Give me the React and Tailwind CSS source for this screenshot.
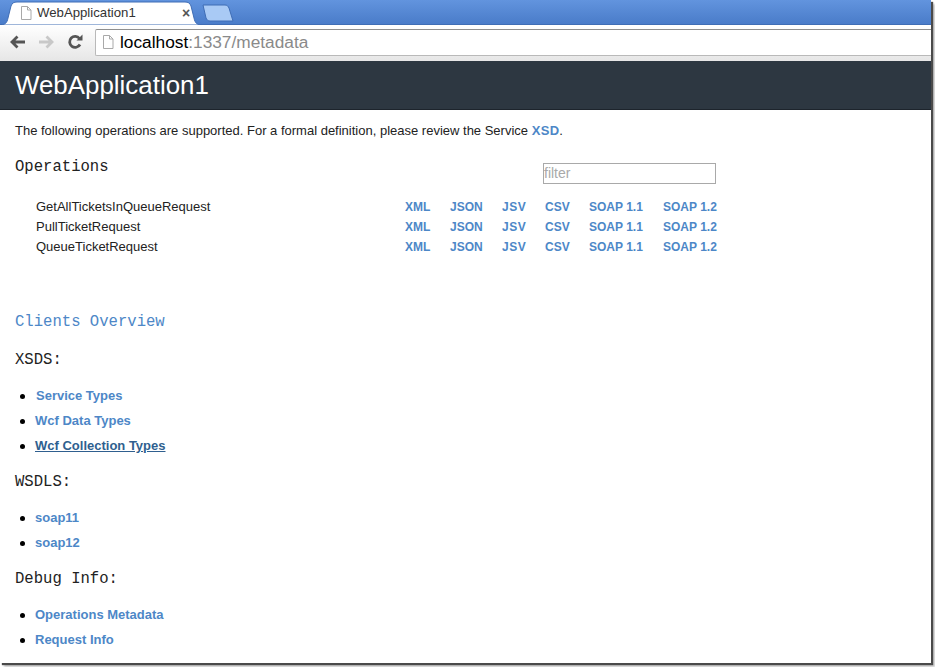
import React from 'react';

const formats = [
    { label: 'XML', className: 'w-[45px]' },
    { label: 'JSON', className: 'w-[52px]' },
    { label: 'JSV', className: 'w-[43px] tracking-[0.5px]' },
    { label: 'CSV', className: 'w-[44px]' },
    { label: 'SOAP 1.1', className: 'w-[74px]' },
    { label: 'SOAP 1.2', className: 'w-[56px] whitespace-nowrap' },
];

const operations = ['GetAllTicketsInQueueRequest', 'PullTicketRequest', 'QueueTicketRequest'];

function PageIcon({ className }) {
    return (
        <svg className={className} viewBox="0 0 14 16" fill="none">
            <path d="M2.500 1.500h6l3.500 3.500v9.500h-9.500z" fill="#fff" stroke="#a9a9a9" />
            <path d="M8.500 1.500v3.500h3.500" stroke="#a9a9a9" />
        </svg>
    );
}

function Heading({ children, className = '' }) {
    return <h2 className={`font-['Liberation_Mono',monospace] text-[15.600px] leading-[20px] text-[#222] ${className}`}>{children}</h2>;
}

function LinkList({ items, className = '' }) {
    return (
        <ul className={`flex flex-col gap-[7px] ${className}`}>
            {items.map((item) => (
                <li key={item.label} className="flex h-[18px] items-center">
                    <span className="ml-[5px] h-[5px] w-[5px] rounded-full bg-black"></span>
                    <a className={`text-[13px] font-bold leading-[18px] text-[#4d87c7] ${item.className || 'ml-[10px]'}`}>{item.label}</a>
                </li>
            ))}
        </ul>
    );
}

export default function App() {
    return (
        <div className="h-[667px] w-[935px] overflow-hidden bg-white font-['Liberation_Sans',sans-serif]">
            <div className="h-[663px] w-[931px] overflow-hidden bg-white shadow-[2px_2px_1px_#4a4a4a,4px_4px_2px_#c4c4c4]">
                {/* Tab strip */}
                <div className="flex h-[25px] items-end border-b border-[#3f6db5] bg-gradient-to-b from-[#6294de] to-[#4a7cc9]">
                    <div className="relative z-10 -mb-px flex h-[24px] w-[203px] items-center">
                        <svg className="absolute inset-0" width="203" height="24" viewBox="0 0 203 24">
                            <path d="M0 24c5 0 7-2 8-7l3-12c1-3 3-4 6-4h168c3 0 5 1 6 4l3 12c1 5 3 7 8 7z" fill="#fff" stroke="#3f6db5" />
                        </svg>
                        <PageIcon className="relative ml-[19px] h-[16px] w-[14px]" />
                        <span className="relative ml-[4px] text-[13.200px] text-[#333]">WebApplication1</span>
                        <span className="absolute left-[182px] top-[3px] text-[14px] font-bold leading-[18px] text-[#555]">×</span>
                    </div>
                    <svg className="mb-[2px] ml-[-1px]" width="32" height="18" viewBox="0 0 32 18">
                        <path d="M1 1h22c2 0 3 1 4 3l4 13H8c-2 0-3-1-4-3z" fill="#a9caf5" stroke="#3f6db5" />
                    </svg>
                </div>

                {/* Toolbar */}
                <div className="flex h-[36px] items-center bg-gradient-to-b from-[#fff] to-[#e6e6e6] pb-[2px] pl-[9px]">
                    <svg width="17" height="16" viewBox="0 0 17 16" fill="none" stroke="#555" strokeWidth="2.800">
                        <path d="M16 8H3M8.500 2.500L3 8l5.500 5.500" />
                    </svg>
                    <svg className="ml-[12px]" width="17" height="16" viewBox="0 0 17 16" fill="none" stroke="#c8c8c8" strokeWidth="2.800">
                        <path d="M1 8h13M8.500 2.500L14 8l-5.500 5.500" />
                    </svg>
                    <svg className="ml-[12px]" width="17" height="16" viewBox="0 0 17 16" fill="none">
                        <path d="M13 10.500A5.500 5.500 0 1 1 12.500 4.500" stroke="#555" strokeWidth="2.800" />
                        <path d="M9.500 6.500h6v-6z" fill="#555" />
                    </svg>
                    <div className="ml-[11px] flex h-[27px] flex-1 items-center rounded-l-[2px] border border-r-0 border-[#b9b9b9] border-t-[#8f8f8f] bg-white">
                        <PageIcon className="ml-[5px] h-[16px] w-[14px]" />
                        <span className="ml-[5px] mt-[2px] text-[17.300px] text-black">
                            localhost<span className="text-[#8a8a8a]">:1337/metadata</span>
                        </span>
                    </div>
                </div>

                {/* Page header */}
                <div className="flex h-[49px] items-center border-b border-[#1d242c] bg-[#2d3741] pl-[15px]">
                    <h1 className="text-[25.900px] leading-[32px] text-white">WebApplication1</h1>
                </div>

                {/* Content */}
                <div className="px-[15px] pt-[13px]">
                    <p className="text-[13px] leading-[16px] text-[#222]">
                        The following operations are supported. For a formal definition, please review the Service{' '}
                        <a className="font-bold tracking-[0.3px] text-[#4d87c7]">XSD</a>.
                    </p>

                    <div className="mt-[19px] flex h-[24px] w-[701px] items-start justify-between">
                        <Heading className="mt-[-1px]">Operations</Heading>
                        <input
                            placeholder="filter"
                            className="mt-[5px] h-[21px] w-[173px] border border-[#a9a9a9] text-[14px] outline-none placeholder:text-[#a9a9a9]"
                        />
                    </div>

                    <div className="mt-[16px] flex flex-col gap-[2px] pl-[21px]">
                        {operations.map((name) => (
                            <div key={name} className="flex h-[18px] items-center">
                                <span className="w-[369px] text-[13px] text-[#222]">{name}</span>
                                {formats.map((f) => (
                                    <a key={f.label} className={`text-[12px] font-bold text-[#4d87c7] ${f.className}`}>{f.label}</a>
                                ))}
                            </div>
                        ))}
                    </div>

                    <Heading className="mt-[56px] !text-[#4d87c7]">Clients Overview</Heading>
                    <Heading className="mt-[18px]">XSDS:</Heading>
                    <LinkList
                        className="mt-[17px]"
                        items={[
                            { label: 'Service Types', className: 'ml-[11px]' },
                            { label: 'Wcf Data Types' },
                            { label: 'Wcf Collection Types', className: 'ml-[10px] !text-[#2f5f8f] underline' },
                        ]}
                    />
                    <Heading className="mt-[17px]">WSDLS:</Heading>
                    <LinkList className="mt-[17px]" items={[{ label: 'soap11' }, { label: 'soap12' }]} />
                    <Heading className="mt-[17px]">Debug Info:</Heading>
                    <LinkList className="mt-[17px]" items={[{ label: 'Operations Metadata' }, { label: 'Request Info' }]} />
                </div>
            </div>
        </div>
    );
}
